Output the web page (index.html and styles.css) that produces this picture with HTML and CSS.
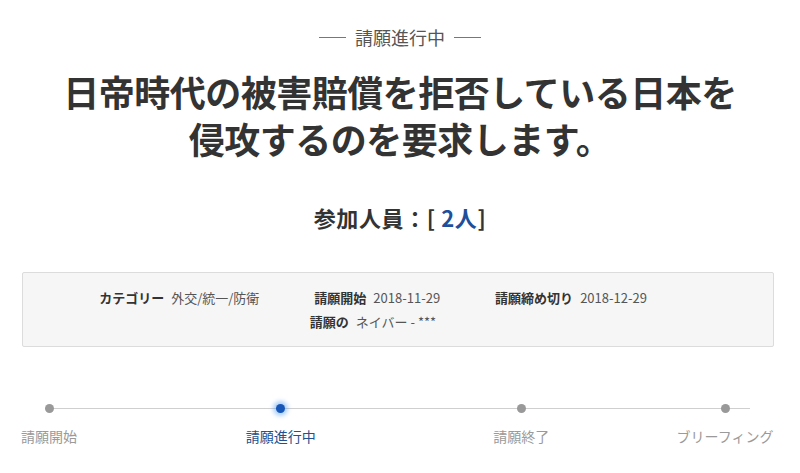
FILE: index.html
```html
<!DOCTYPE html>
<html lang="ja">
<head>
    <meta charset="UTF-8">
    <title>請願進行中</title>
    <link rel="stylesheet" href="styles.css">
</head>
<body>
    <div class="page">
        <p class="status"><span class="dash"></span>請願進行中<span class="dash"></span></p>
        <h1 class="title">日帝時代の被害賠償を拒否している日本を<br>侵攻するのを要求します。</h1>
        <p class="count">参加人員：[ <span class="num">2人</span>]</p>

        <div class="info">
            <div class="info-row">
                <div class="item"><b>カテゴリー</b><span>外交/統一/防衛</span></div>
                <div class="item"><b>請願開始</b><span>2018-11-29</span></div>
                <div class="item"><b>請願締め切り</b><span>2018-12-29</span></div>
            </div>
            <div class="info-row">
                <div class="item"><b>請願の</b><span>ネイバー - ***</span></div>
            </div>
        </div>

        <div class="steps">
            <div class="step step1"><i class="dot"></i><span>請願開始</span></div>
            <div class="step step2 active"><i class="dot"></i><span>請願進行中</span></div>
            <div class="step step3"><i class="dot"></i><span>請願終了</span></div>
            <div class="step step4"><i class="dot"></i><span>ブリーフィング</span></div>
        </div>
    </div>
</body>
</html>
```

FILE: styles.css
```css
body {
    margin: 0;
    background: #fff;
    font-family: "Noto Sans CJK JP", "Noto Sans", sans-serif;
    color: #333;
}

.page {
    width: 800px;
    text-align: center;
}

.status {
    margin: 24px 0 0;
    font-size: 18px;
    line-height: 26px;
    color: #555;
    display: flex;
    justify-content: center;
    align-items: center;
    gap: 9px;
}

.dash {
    display: block;
    width: 27px;
    height: 1px;
    background: #777;
}

.title {
    margin: 18px 0 0;
    font-size: 36px;
    line-height: 47px;
    font-weight: bold;
    color: #333;
    letter-spacing: -0.5px;
}

.count {
    margin: 40px 0 0;
    font-size: 22px;
    line-height: 30px;
    font-weight: bold;
    color: #333;
    letter-spacing: 0.6px;
}

.count .num {
    color: #1d4f9c;
}

.info {
    margin: 40px 26px 0 22px;
    padding: 13px 50px 12px 0;
    background: #f6f6f6;
    border: 1px solid #dcdcdc;
    border-radius: 2px;
}

.info-row {
    display: flex;
    justify-content: center;
    gap: 55px;
    font-size: 13px;
    line-height: 24px;
}

.item b {
    color: #333;
    margin-right: 7px;
}

.item span {
    color: #555;
}

.steps {
    position: relative;
    display: flex;
    margin: 57px 27px 0 22px;
}

.steps::before {
    content: "";
    position: absolute;
    left: 26px;
    right: 23px;
    top: 4px;
    height: 1px;
    background: #cfcfcf;
}

.step {
    position: relative;
    display: flex;
    flex-direction: column;
    align-items: center;
    font-size: 14px;
    line-height: 20px;
    color: #9a9a9a;
    white-space: nowrap;
}

.step span {
    margin-top: 13px;
}

.step1 { width: 54px; }
.step2 { width: 120px; margin-left: 145px; }
.step3 { width: 120px; margin-left: 121px; }
.step4 { width: 96px; margin-left: 96px; }

.dot {
    display: block;
    width: 9px;
    height: 9px;
    border-radius: 50%;
    background: #999;
}

.step.active {
    color: #24508f;
}

.step.active .dot {
    background: #1656b8;
    box-shadow: 0 0 4px 3px rgba(70, 150, 235, 0.45);
}
```
